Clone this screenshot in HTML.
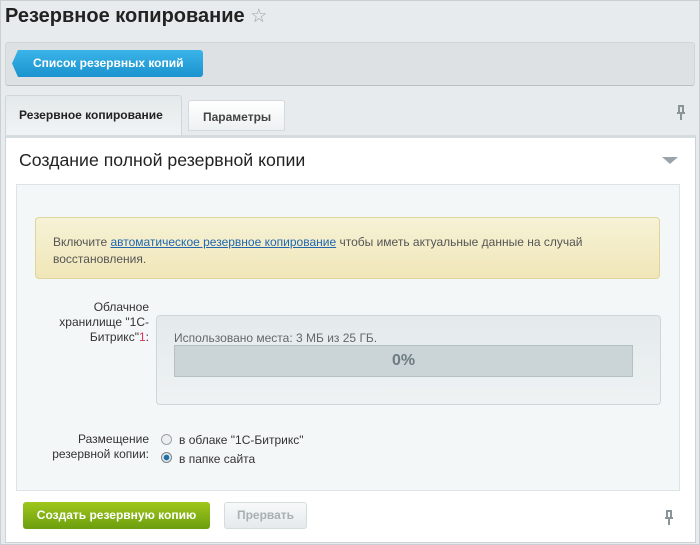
<!DOCTYPE html>
<html><head><meta charset="utf-8"><style>
*{box-sizing:border-box;margin:0;padding:0}
body{width:700px;height:545px;background:#e6eaec;font-family:"Liberation Sans",sans-serif;position:relative;overflow:hidden;color:#000}
.a{position:absolute}
</style></head><body>
<div class="a" style="left:0;top:0;width:700px;height:545px;border:1px solid #c9cfd2;background:#e7ebed"></div>
<div class="a" style="left:5px;top:5px;font-size:20px;font-weight:bold;color:#222">Резервное копирование <span style="color:#9aa3a8;font-weight:normal;font-size:19px">☆</span></div>
<div class="a" style="left:5px;top:42px;width:690px;height:44px;background:#dde1e3;border:1px solid #cfd5d8;border-bottom-color:#b9c1c5;border-radius:3px"></div>
<div class="a" style="left:12px;top:50px;width:191px;height:27px;background:linear-gradient(#3bb4ea,#1a93cf);border-radius:3px;color:#fff;font-size:12px;font-weight:bold;line-height:27px;padding-left:21px;clip-path:polygon(6px 0,100% 0,100% 100%,6px 100%,0 50%)">Список резервных копий</div>
<div class="a" style="left:5px;top:95px;width:177px;height:42px;background:linear-gradient(#e4e9ea,#f1f4f5);border:1px solid #cfd6d9;border-bottom:none;border-radius:3px 3px 0 0;font-size:12px;font-weight:bold;color:#222;padding:12px 0 0 13px">Резервное копирование</div>
<div class="a" style="left:188px;top:100px;width:97px;height:31px;background:linear-gradient(#fff,#eef1f2);border:1px solid #d3d9dc;border-radius:3px 3px 0 0;font-size:12px;font-weight:bold;color:#444;padding:9px 0 0 14px">Параметры</div>
<svg class="a" style="left:675px;top:105px" width="12" height="16" viewBox="0 0 12 16"><path d="M3 1h6M4 1v6M8 1v6M2 8h8M6 8v7" stroke="#8a9499" stroke-width="2" fill="none"/></svg>
<div class="a" style="left:5px;top:135px;width:691px;height:408px;background:#fff;border:1px solid #cbd3d6;border-top:3px solid #d5dcdf"></div>
<div class="a" style="left:19px;top:150px;font-size:17.7px;color:#222">Создание полной резервной копии</div>
<div class="a" style="left:662px;top:157px;width:0;height:0;border-left:8px solid transparent;border-right:8px solid transparent;border-top:7px solid #9ba4a9"></div>
<div class="a" style="left:16px;top:184px;width:664px;height:307px;background:#f4f7f8;border:1px solid #dde4e6"></div>
<div class="a" style="left:35px;top:217px;width:625px;height:62px;background:linear-gradient(#f6f2d6,#f0e6b8);border:1px solid #dfd49d;border-radius:4px;font-size:12px;color:#555;padding:16px 0 0 17px;line-height:17px">Включите <span style="color:#2067b0;text-decoration:underline">автоматическое резервное копирование</span> чтобы иметь актуальные данные на случай<br>восстановления.</div>
<div class="a" style="left:30px;top:300px;width:119px;text-align:right;font-size:12px;color:#333;line-height:15px">Облачное<br>хранилище "1С-<br>Битрикс"<span style="color:#e0325a">1</span>:</div>
<div class="a" style="left:156px;top:315px;width:505px;height:90px;background:linear-gradient(#e4eaec,#eef2f3);border:1px solid #cfd6d9;border-radius:4px"></div>
<div class="a" style="left:174px;top:331px;font-size:12px;color:#666">Использовано места: 3 МБ из 25 ГБ.</div>
<div class="a" style="left:174px;top:345px;width:459px;height:32px;background:#cbd4d6;border:1px solid #b5c0c3;text-align:center;font-size:16px;font-weight:bold;color:#6d7c82;line-height:30px">0%</div>
<div class="a" style="left:30px;top:432px;width:119px;text-align:right;font-size:12px;color:#333;line-height:15px">Размещение<br>резервной копии:</div>
<div class="a" style="left:161px;top:434px;width:11px;height:11px;border-radius:50%;border:1px solid #9aa3a8;background:#eee"></div>
<div class="a" style="left:179px;top:433px;font-size:12px;color:#333">в облаке "1С-Битрикс"</div>
<div class="a" style="left:161px;top:452px;width:11px;height:11px;border-radius:50%;border:1px solid #7a868c;background:radial-gradient(#1a6fa8 2.5px,#dfe4e6 3px)"></div>
<div class="a" style="left:179px;top:452px;font-size:12px;color:#333">в папке сайта</div>
<div class="a" style="left:23px;top:502px;width:187px;height:27px;background:linear-gradient(#9fc71c,#6c9e0e);border-radius:3px;color:#fff;font-size:12px;font-weight:bold;text-align:center;line-height:27px">Создать резервную копию</div>
<div class="a" style="left:224px;top:502px;width:83px;height:27px;background:linear-gradient(#f8fafa,#e4e9eb);border:1px solid #d5dcde;border-radius:3px;color:#a8b0b4;font-size:12px;font-weight:bold;text-align:center;line-height:25px">Прервать</div>
<svg class="a" style="left:663px;top:510px" width="12" height="16" viewBox="0 0 12 16"><path d="M3 1h6M4 1v6M8 1v6M2 8h8M6 8v7" stroke="#8a9499" stroke-width="2" fill="none"/></svg>
</body></html>
